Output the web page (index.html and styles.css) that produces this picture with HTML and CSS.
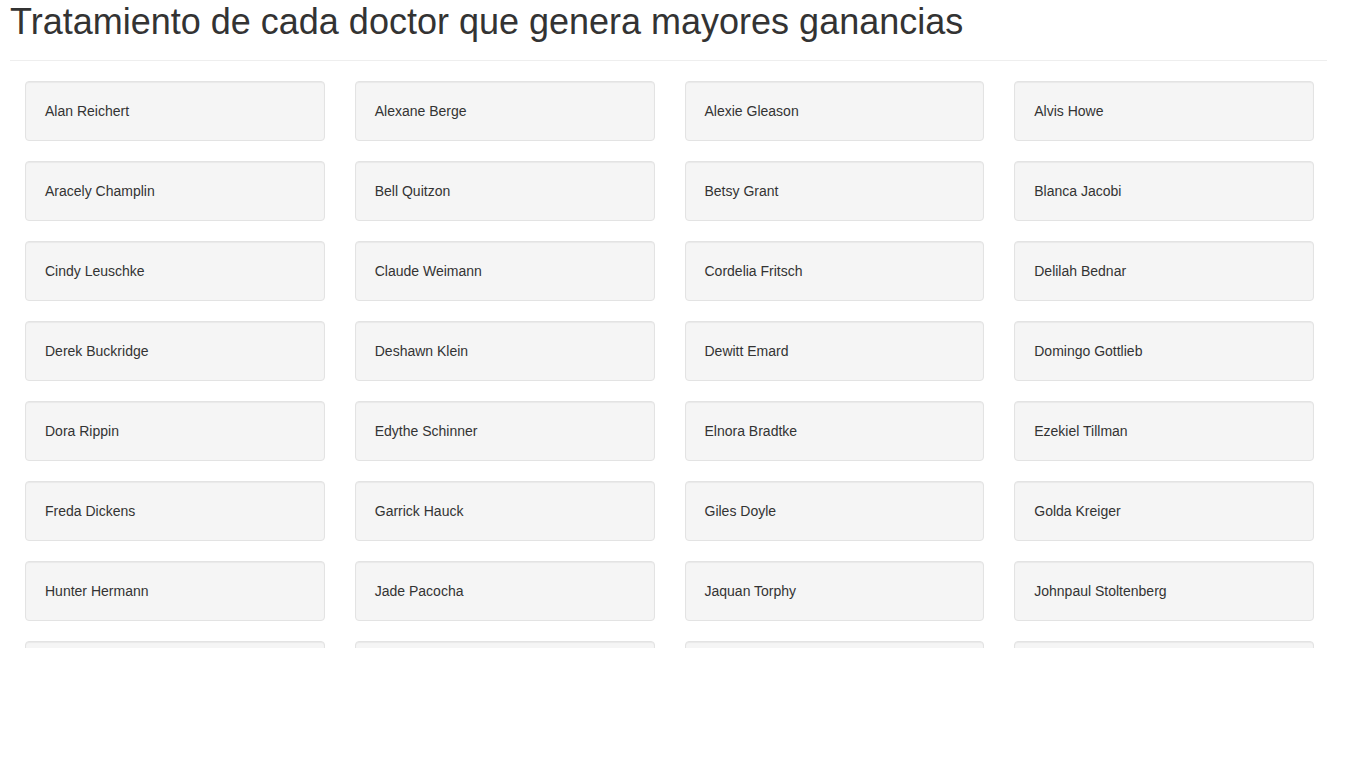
FILE: index.html
```html
<!DOCTYPE html>
<html lang="es">
<head>
<meta charset="utf-8">
<title>Tratamientos</title>
<link rel="stylesheet" href="styles.css">
</head>
<body>
<div class="page">
  <h1 class="title">Tratamiento de cada doctor que genera mayores ganancias</h1>
  <hr class="divider">
  <div class="scroller">
    <div class="grid">
      <div class="well">Alan Reichert</div>
      <div class="well">Alexane Berge</div>
      <div class="well">Alexie Gleason</div>
      <div class="well">Alvis Howe</div>
      <div class="well">Aracely Champlin</div>
      <div class="well">Bell Quitzon</div>
      <div class="well">Betsy Grant</div>
      <div class="well">Blanca Jacobi</div>
      <div class="well">Cindy Leuschke</div>
      <div class="well">Claude Weimann</div>
      <div class="well">Cordelia Fritsch</div>
      <div class="well">Delilah Bednar</div>
      <div class="well">Derek Buckridge</div>
      <div class="well">Deshawn Klein</div>
      <div class="well">Dewitt Emard</div>
      <div class="well">Domingo Gottlieb</div>
      <div class="well">Dora Rippin</div>
      <div class="well">Edythe Schinner</div>
      <div class="well">Elnora Bradtke</div>
      <div class="well">Ezekiel Tillman</div>
      <div class="well">Freda Dickens</div>
      <div class="well">Garrick Hauck</div>
      <div class="well">Giles Doyle</div>
      <div class="well">Golda Kreiger</div>
      <div class="well">Hunter Hermann</div>
      <div class="well">Jade Pacocha</div>
      <div class="well">Jaquan Torphy</div>
      <div class="well">Johnpaul Stoltenberg</div>
      <div class="well">Kailey Bauch</div>
      <div class="well">Lempi Hahn</div>
      <div class="well">Lenna Kuhic</div>
      <div class="well">Lonnie Mayer</div>
    </div>
  </div>
</div>
</body>
</html>
```

FILE: styles.css
```css
html, body {
  margin: 0;
  padding: 0;
  background: #fff;
}
body {
  font-family: "Liberation Sans", Arial, Helvetica, sans-serif;
  font-size: 14px;
  line-height: 20px;
  color: #333;
}
.page {
  width: 1319px;
  padding-left: 10px;
}
.title {
  margin: 2px 0 0 0;
  font-size: 36px;
  font-weight: 500;
  line-height: 39.6px;
  color: #333;
}
.divider {
  margin: 18px 0 0 0;
  border: 0;
  border-top: 1px solid #eee;
  height: 0;
  width: 1317px;
}
.scroller {
  height: 587px;
  overflow: hidden;
  padding-top: 20px;
  box-sizing: border-box;
}
.grid {
  display: grid;
  grid-template-columns: repeat(4, 1fr);
  column-gap: 0;
}
.well {
  margin: 0 15px 20px 15px;
  min-height: 20px;
  padding: 19px;
  background-color: #f5f5f5;
  border: 1px solid #e3e3e3;
  border-radius: 4px;
  box-shadow: inset 0 1px 1px rgba(0, 0, 0, 0.05);
}
```
